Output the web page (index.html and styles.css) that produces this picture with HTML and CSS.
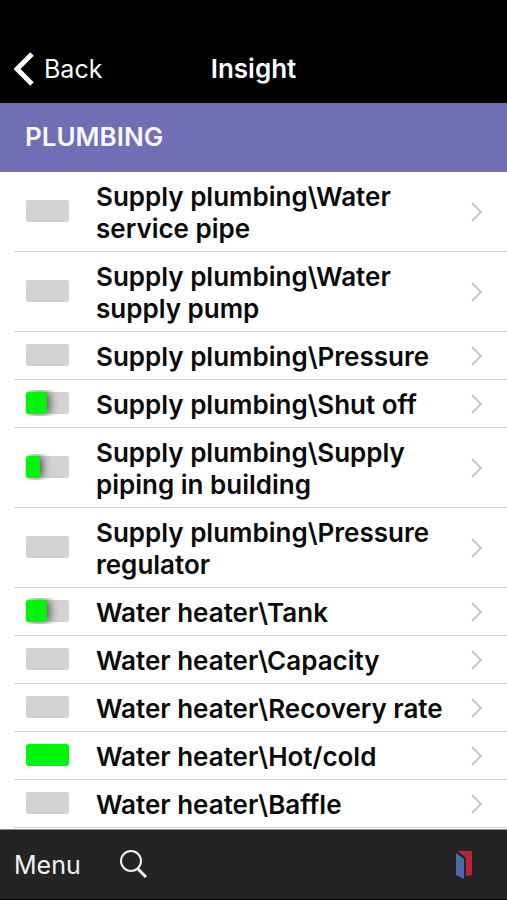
FILE: index.html
```html
<!DOCTYPE html>
<html lang="en">
<head>
<meta charset="utf-8">
<meta name="viewport" content="width=device-width, initial-scale=1">
<title>Insight</title>
<link rel="stylesheet" href="styles.css">
</head>
<body>
<header class="navbar">
  <button class="back" type="button">
    <svg class="back-icon" viewBox="0 0 20 34" aria-hidden="true"><path d="M18 2 3 17l15 15"/></svg>
    <span>Back</span>
  </button>
  <h1 class="title">Insight</h1>
</header>
<main class="content">
  <h2 class="section">PLUMBING</h2>
  <ul class="list">
    <li><a class="row" href="#"><span class="meter"></span><span class="label">Supply plumbing\Water service pipe</span><svg class="chevron" viewBox="0 0 12 20" aria-hidden="true"><path d="m1 1 9 9-9 9"/></svg></a></li>
    <li><a class="row" href="#"><span class="meter"></span><span class="label">Supply plumbing\Water supply pump</span><svg class="chevron" viewBox="0 0 12 20" aria-hidden="true"><path d="m1 1 9 9-9 9"/></svg></a></li>
    <li><a class="row" href="#"><span class="meter"></span><span class="label">Supply plumbing\Pressure</span><svg class="chevron" viewBox="0 0 12 20" aria-hidden="true"><path d="m1 1 9 9-9 9"/></svg></a></li>
    <li><a class="row" href="#"><span class="meter"><span class="fill" style="width:48%"></span></span><span class="label">Supply plumbing\Shut off</span><svg class="chevron" viewBox="0 0 12 20" aria-hidden="true"><path d="m1 1 9 9-9 9"/></svg></a></li>
    <li><a class="row" href="#"><span class="meter"><span class="fill" style="width:33%"></span></span><span class="label">Supply plumbing\Supply piping in building</span><svg class="chevron" viewBox="0 0 12 20" aria-hidden="true"><path d="m1 1 9 9-9 9"/></svg></a></li>
    <li><a class="row" href="#"><span class="meter"></span><span class="label">Supply plumbing\Pressure regulator</span><svg class="chevron" viewBox="0 0 12 20" aria-hidden="true"><path d="m1 1 9 9-9 9"/></svg></a></li>
    <li><a class="row" href="#"><span class="meter"><span class="fill" style="width:48%"></span></span><span class="label">Water heater\Tank</span><svg class="chevron" viewBox="0 0 12 20" aria-hidden="true"><path d="m1 1 9 9-9 9"/></svg></a></li>
    <li><a class="row" href="#"><span class="meter"></span><span class="label">Water heater\Capacity</span><svg class="chevron" viewBox="0 0 12 20" aria-hidden="true"><path d="m1 1 9 9-9 9"/></svg></a></li>
    <li><a class="row" href="#"><span class="meter"></span><span class="label">Water heater\Recovery rate</span><svg class="chevron" viewBox="0 0 12 20" aria-hidden="true"><path d="m1 1 9 9-9 9"/></svg></a></li>
    <li><a class="row" href="#"><span class="meter full"></span><span class="label">Water heater\Hot/cold</span><svg class="chevron" viewBox="0 0 12 20" aria-hidden="true"><path d="m1 1 9 9-9 9"/></svg></a></li>
    <li><a class="row" href="#"><span class="meter"></span><span class="label">Water heater\Baffle</span><svg class="chevron" viewBox="0 0 12 20" aria-hidden="true"><path d="m1 1 9 9-9 9"/></svg></a></li>
  </ul>
</main>
<footer class="toolbar">
  <button class="menu" type="button">Menu</button>
  <button class="tool" type="button" aria-label="Search">
    <svg class="search-icon" viewBox="0 0 28 28" aria-hidden="true"><circle cx="12" cy="11" r="10"/><path d="m19 19 8 8"/></svg>
  </button>
  <button class="tool brand" type="button" aria-label="Report">
    <svg class="brand-icon" viewBox="0 0 16 28" aria-hidden="true"><path class="red" d="M2 0h14v24l-6 1V7z"/><path class="blue" d="m0 2 8 6v20l-8-4z"/></svg>
  </button>
</footer>
</body>
</html>
```
FILE: styles.css
```css
* { box-sizing: border-box; }

body {
  margin: 0;
  min-height: 100vh;
  display: flex;
  flex-direction: column;
  background: #fff;
  color: #0a0a0a;
  font-family: Inter, "Liberation Sans", sans-serif;
  font-size: 26px;
  line-height: 32px;
}

button {
  margin: 0;
  padding: 0;
  border: 0;
  background: none;
  color: inherit;
  font: inherit;
}

.navbar {
  display: grid;
  grid-template-columns: 1fr auto 1fr;
  align-items: center;
  padding: 34px 14px 0;
  height: 103px;
  background: #000;
  color: #fff;
}

.back {
  display: flex;
  align-items: center;
  gap: 10px;
  justify-self: start;
  font-size: 25px;
}

.back-icon {
  width: 20px;
  height: 34px;
  fill: none;
  stroke: #fff;
  stroke-width: 5;
}

.title {
  margin: 0;
  font-size: 26px;
  font-weight: 600;
}

.content { flex: 1; }

.section {
  margin: 0;
  padding: 18px 25px 19px;
  background: #706fb5;
  color: #f8f6ff;
  font-size: 26px;
  font-weight: 600;
}

.list {
  margin: 0;
  padding: 0 0 0 14px;
  list-style: none;
}

.row {
  display: flex;
  align-items: center;
  padding: 9px 24px 6px 12px;
  border-bottom: 1px solid #d2d2d4;
  color: inherit;
  text-decoration: none;
}

.meter {
  flex: none;
  width: 43px;
  height: 22px;
  margin: 0 27px 4px 0;
  border-radius: 2px;
  background: #d3d3d3;
}

.fill {
  display: block;
  height: 100%;
  border-radius: 3px;
  background: #00f50a;
  box-shadow: 3px 0 8px #555;
  clip-path: inset(-2px -14px -2px -1px);
}

.full {
  border-radius: 3px;
  background: #00f50a;
}

.label {
  flex: 1;
  font-weight: 600;
}

.chevron {
  flex: none;
  width: 12px;
  height: 20px;
  margin-bottom: 2px;
  fill: none;
  stroke: #c4c4c6;
  stroke-width: 2;
}

.toolbar {
  display: flex;
  align-items: center;
  height: 71px;
  padding: 0 35px 0 14px;
  border-top: 1px solid #8a8a8a;
  border-bottom: 1px solid #000;
  background: #242424;
  color: #f2f2f2;
}

.menu { font-size: 25px; }

.tool { display: flex; }

.search-icon {
  width: 28px;
  height: 28px;
  margin: 0 0 2px 38px;
  fill: none;
  stroke: #f2f2f2;
  stroke-width: 2;
}

.search-icon path { stroke-width: 3; }

.brand { margin-left: auto; }

.brand-icon {
  width: 16px;
  height: 28px;
}

.red { fill: #b9233c; }
.blue { fill: #4c69a8; }
```
